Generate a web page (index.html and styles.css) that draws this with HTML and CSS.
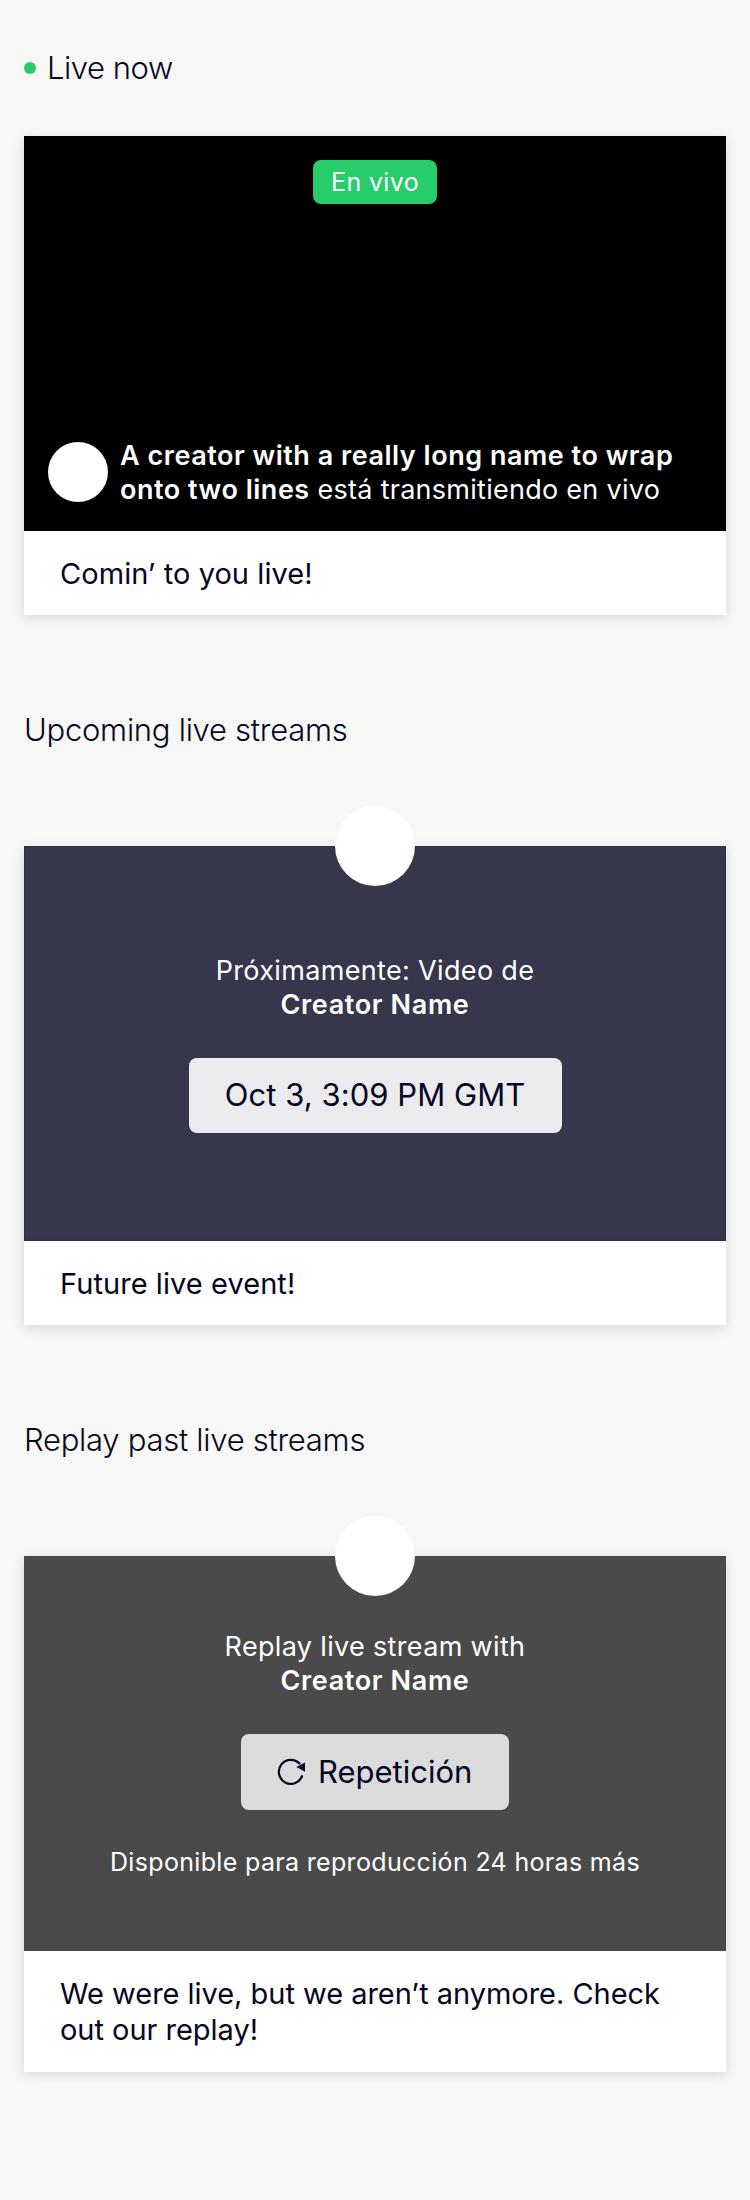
FILE: index.html
```html
<!DOCTYPE html>
<html lang="es">
<head>
<meta charset="utf-8">
<title>Live streams</title>
<link rel="stylesheet" href="styles.css">
</head>
<body>
<main class="page">
  <section class="section">
    <h2 class="heading heading--live"><span class="live-dot"></span>Live now</h2>
    <article class="card">
      <div class="media media--live">
        <span class="badge">En vivo</span>
        <div class="byline">
          <span class="avatar avatar--small"></span>
          <p class="lead"><strong>A creator with a really long name to wrap onto two lines</strong> está transmitiendo en vivo</p>
        </div>
      </div>
      <p class="caption">Comin’ to you live!</p>
    </article>
  </section>

  <section class="section">
    <h2 class="heading">Upcoming live streams</h2>
    <article class="card">
      <div class="media media--upcoming">
        <span class="avatar avatar--top"></span>
        <p class="lead lead--center">Próximamente: Video de<br><strong>Creator Name</strong></p>
        <div class="pill pill--date">Oct 3, 3:09 PM GMT</div>
      </div>
      <p class="caption">Future live event!</p>
    </article>
  </section>

  <section class="section">
    <h2 class="heading">Replay past live streams</h2>
    <article class="card">
      <div class="media media--replay">
        <span class="avatar avatar--top"></span>
        <p class="lead lead--center">Replay live stream with<br><strong>Creator Name</strong></p>
        <div class="pill pill--replay">
          <svg class="replay-icon" viewBox="0 0 28 28" aria-hidden="true">
            <path d="M25.3 17.4A12 12 0 1 1 23 6.1" fill="none" stroke="currentColor" stroke-width="2.2"/>
            <path d="M19.4 9 28 4.4V13.8Z" fill="currentColor"/>
          </svg>
          <span>Repetición</span>
        </div>
        <p class="note">Disponible para reproducción 24 horas más</p>
      </div>
      <p class="caption caption--long">We were live, but we aren’t anymore. Check out our replay!</p>
    </article>
  </section>
</main>
</body>
</html>
```
FILE: styles.css
```css
* { box-sizing: border-box; }

body {
  margin: 0;
  min-height: 2200px;
  background: #f7f7f5;
  color: #050624;
  font-family: Inter, "Liberation Sans", sans-serif;
}

p, h2 { margin: 0; }

.page {
  display: flex;
  flex-direction: column;
  gap: 94.6px;
  padding: 48px 24px 0;
}

.section {
  display: flex;
  flex-direction: column;
  gap: 96px;
}

.heading {
  font-size: 31px;
  font-weight: 300;
  line-height: 40px;
  letter-spacing: -0.27px;
}

.heading--live {
  display: flex;
  align-items: center;
  gap: 11px;
  margin-bottom: -48px;
  letter-spacing: -0.45px;
}

.live-dot {
  width: 12px;
  height: 12px;
  border-radius: 50%;
  background: #28cd6b;
}

.card {
  background: #fff;
  box-shadow: 0 3px 12px rgba(0, 0, 0, 0.13);
}

.media {
  position: relative;
  display: flex;
  flex-direction: column;
  align-items: center;
  height: 395px;
  color: #fff;
}

.media--live {
  justify-content: space-between;
  padding: 24px;
  background: #000;
}

.media--upcoming {
  padding-top: 108px;
  gap: 36px;
  background: #36374c;
  box-shadow: inset 0 0 2px 1px rgba(0, 0, 40, 0.14);
}

.media--replay {
  gap: 36px;
  padding-top: 74px;
  background: #4a4a4a;
}

.badge {
  width: 124px;
  height: 44px;
  border-radius: 8px;
  background: #28cd6b;
  font-size: 25px;
  line-height: 45px;
  letter-spacing: 0.35px;
  text-align: center;
}

.byline {
  display: flex;
  align-self: stretch;
  align-items: flex-start;
  gap: 12px;
}

.avatar {
  border-radius: 50%;
  background: #fff;
}

.avatar--small {
  flex: none;
  width: 60px;
  height: 60px;
  margin-top: 3px;
}

.avatar--top {
  position: absolute;
  top: -40px;
  left: calc(50% - 40px);
  width: 80px;
  height: 80px;
}

.lead {
  font-size: 27px;
  font-weight: 400;
  line-height: 34px;
  letter-spacing: 0.27px;
}

.lead strong {
  font-weight: 600;
  letter-spacing: 0.52px;
}

.lead--center {
  letter-spacing: 0.34px;
  text-align: center;
}

.lead--center strong { letter-spacing: 0.64px; }

.pill {
  border-radius: 8px;
  color: #050624;
  font-size: 31px;
  line-height: 74px;
}

.pill--date {
  width: 373px;
  height: 75px;
  background: #ebebed;
  letter-spacing: 0.06px;
  text-align: center;
}

.pill--replay {
  display: flex;
  align-items: center;
  gap: 13px;
  width: 268px;
  height: 76px;
  padding-left: 36px;
  background: #dbdbdb;
}

.replay-icon {
  width: 28px;
  height: 28px;
}

.note {
  margin-top: 1px;
  font-size: 25px;
  line-height: 30px;
  letter-spacing: 0.33px;
}

.caption {
  padding: 25px 36px 23px;
  font-size: 29px;
  line-height: 36.4px;
  letter-spacing: 0.06px;
}

.caption--long { letter-spacing: -0.03px; }
```
